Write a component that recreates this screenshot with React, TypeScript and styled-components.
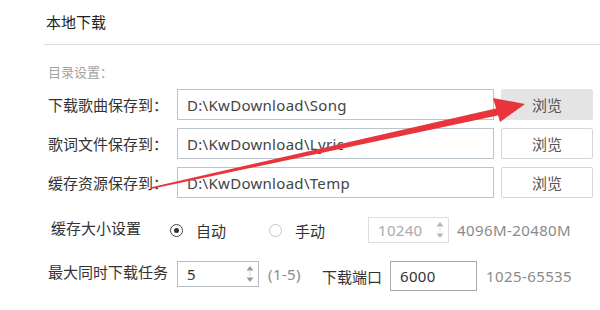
import styled, { createGlobalStyle } from "styled-components";

const GlobalStyle = createGlobalStyle`
  html, body {
    margin: 0;
    background: #fff;
  }
  body {
    font-family: "Noto Sans", "Noto Sans CJK SC", sans-serif;
    color: #333;
  }
`;

const Page = styled.div`
  position: relative;
  width: 600px;
  height: 310px;
  overflow: hidden;
  box-sizing: border-box;
  padding: 12px 0 0 44px;
`;

const Title = styled.div`
  font-size: 15px;
  line-height: 20px;
  height: 32px;
  padding-left: 2px;
  color: #222;
`;

const Divider = styled.div`
  border-top: 1px solid #dcdcdc;
`;

const SectionLabel = styled.div`
  margin: 18px 0 0 4px;
  font-size: 13px;
  line-height: 18px;
  color: #a3a3a3;
`;

const PathList = styled.div`
  display: flex;
  flex-direction: column;
  gap: 8px;
  margin-top: 8px;
`;

const PathRow = styled.div`
  display: flex;
  align-items: center;
  height: 31px;
`;

const Label = styled.div<{ $width: number; $indent?: number }>`
  width: ${(p) => p.$width}px;
  padding-left: ${(p) => p.$indent ?? 4}px;
  box-sizing: border-box;
  font-size: 15px;
  white-space: nowrap;
  flex-shrink: 0;
`;

const PathInput = styled.div`
  width: 317px;
  height: 31px;
  box-sizing: border-box;
  border: 1px solid #b9c4cd;
  padding-left: 9px;
  display: flex;
  align-items: center;
  font-size: 15px;
  letter-spacing: 0.3px;
  color: #444;
`;

const BrowseButton = styled.div<{ $hover?: boolean }>`
  margin-left: 7px;
  width: 92px;
  height: 31px;
  box-sizing: border-box;
  border: 1px solid ${(p) => (p.$hover ? "#e4e4e4" : "#d6d6d6")};
  border-radius: 2px;
  background: ${(p) => (p.$hover ? "#e4e4e4" : "#fff")};
  display: flex;
  align-items: center;
  justify-content: center;
  font-size: 15px;
  color: #555;
`;

const OptionRow = styled.div<{ $top: number }>`
  display: flex;
  align-items: flex-start;
  margin-top: ${(p) => p.$top}px;
  height: 30px;
`;

const Cell = styled.div<{ $gap?: number; $h?: number }>`
  display: flex;
  align-items: center;
  height: ${(p) => p.$h ?? 26}px;
  margin-left: ${(p) => p.$gap ?? 0}px;
  font-size: 15px;
  white-space: nowrap;
`;

const Radio = styled.span<{ $checked?: boolean }>`
  width: 13px;
  height: 13px;
  box-sizing: border-box;
  border-radius: 50%;
  border: 1px solid ${(p) => (p.$checked ? "#444" : "#c4c4c4")};
  display: inline-flex;
  align-items: center;
  justify-content: center;
  margin-right: 13px;
  &::after {
    content: "";
    display: ${(p) => (p.$checked ? "block" : "none")};
    width: 5px;
    height: 5px;
    border-radius: 50%;
    background: #333;
  }
`;

const Hint = styled.span`
  color: #8a8a8a;
  letter-spacing: 0.4px;
`;

const SpinBox = styled.div<{ $width: number; $disabled?: boolean }>`
  width: ${(p) => p.$width}px;
  height: 26px;
  box-sizing: border-box;
  border: 1px solid ${(p) => (p.$disabled ? "#dedede" : "#b5bcc3")};
  display: flex;
  align-items: center;
  justify-content: space-between;
  padding: 0 3px 0 9px;
  font-size: 15px;
  letter-spacing: 0.3px;
  color: ${(p) => (p.$disabled ? "#aaa" : "#333")};
`;

const PortInput = styled.div`
  width: 87px;
  height: 30px;
  box-sizing: border-box;
  border: 1px solid #a9a9a9;
  display: flex;
  align-items: center;
  padding-left: 9px;
  font-size: 15px;
  letter-spacing: 0.3px;
`;

const Overlay = styled.svg`
  position: absolute;
  left: 0;
  top: 0;
  pointer-events: none;
`;

const SpinArrows = ({ color }: { color: string }) => (
  <svg width="10" height="20" viewBox="0 0 10 20">
    <path d="M5 2 L8.5 6.5 H1.5 Z" fill={color} />
    <path d="M5 18 L8.5 13.5 H1.5 Z" fill={color} />
    <path d="M5 7 V13" stroke={color} strokeWidth="0.8" opacity="0.5" />
  </svg>
);

const paths = [
  { label: "下载歌曲保存到：", value: "D:\\KwDownload\\Song", hover: true },
  { label: "歌词文件保存到：", value: "D:\\KwDownload\\Lyric" },
  { label: "缓存资源保存到：", value: "D:\\KwDownload\\Temp" },
];

export default function App() {
  return (
    <>
      <GlobalStyle />
      <Page>
        <Title>本地下载</Title>
        <Divider />
        <SectionLabel>目录设置：</SectionLabel>
        <PathList>
          {paths.map((p) => (
            <PathRow key={p.label}>
              <Label $width={133}>{p.label}</Label>
              <PathInput>{p.value}</PathInput>
              <BrowseButton $hover={p.hover}>浏览</BrowseButton>
            </PathRow>
          ))}
        </PathList>

        <OptionRow $top={19}>
          <Label $width={126} $indent={7}>
            缓存大小设置
          </Label>
          <Cell>
            <Radio $checked />
            自动
          </Cell>
          <Cell $gap={43}>
            <Radio />
            手动
          </Cell>
          <Cell $gap={43}>
            <SpinBox $width={81} $disabled>
              10240
              <SpinArrows color="#b8b8b8" />
            </SpinBox>
          </Cell>
          <Cell $gap={8}>
            <Hint>4096M-20480M</Hint>
          </Cell>
        </OptionRow>

        <OptionRow $top={14}>
          <Label $width={133}>最大同时下载任务</Label>
          <Cell>
            <SpinBox $width={82}>
              5
              <SpinArrows color="#9a9a9a" />
            </SpinBox>
          </Cell>
          <Cell $gap={9}>
            <Hint>(1-5)</Hint>
          </Cell>
          <Cell $gap={21} $h={30}>
            下载端口
          </Cell>
          <Cell $gap={8} $h={30}>
            <PortInput>6000</PortInput>
          </Cell>
          <Cell $gap={9} $h={30}>
            <Hint>1025-65535</Hint>
          </Cell>
        </OptionRow>

        <Overlay width="600" height="310" viewBox="0 0 600 310">
          <polygon
            points="150,187.5 498,108 500,115 151,189"
            fill="#e8353b"
          />
          <polygon points="525,104 493,98 500,122" fill="#e8353b" />
        </Overlay>
      </Page>
    </>
  );
}
